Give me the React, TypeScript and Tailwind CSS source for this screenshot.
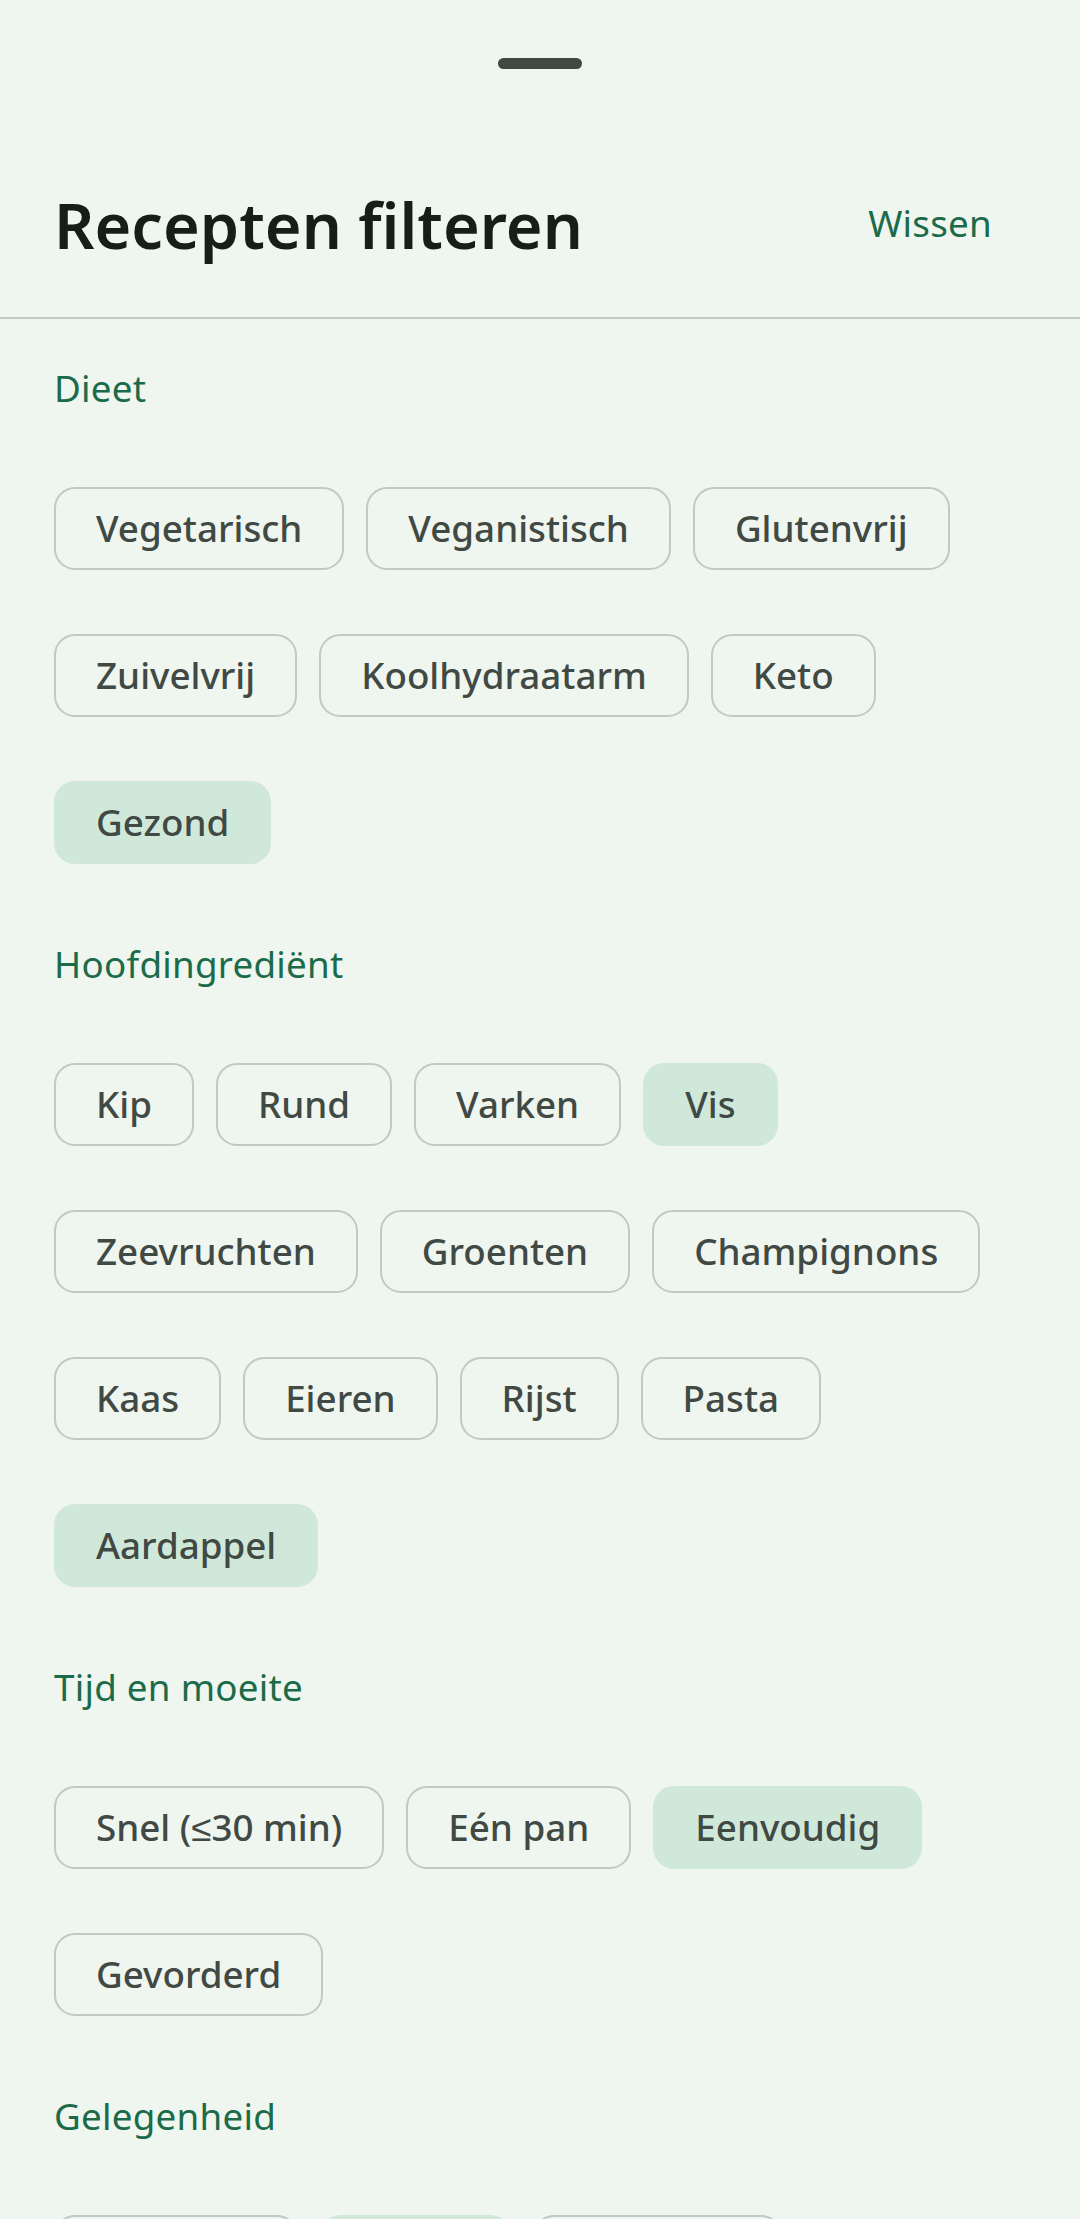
import { useState } from 'react';

type Section = {
  title: string;
  options: string[];
};

const sections: Section[] = [
  {
    title: 'Dieet',
    options: ['Vegetarisch', 'Veganistisch', 'Glutenvrij', 'Zuivelvrij', 'Koolhydraatarm', 'Keto', 'Gezond'],
  },
  {
    title: 'Hoofdingrediënt',
    options: ['Kip', 'Rund', 'Varken', 'Vis', 'Zeevruchten', 'Groenten', 'Champignons', 'Kaas', 'Eieren', 'Rijst', 'Pasta', 'Aardappel'],
  },
  {
    title: 'Tijd en moeite',
    options: ['Snel (≤30 min)', 'Eén pan', 'Eenvoudig', 'Gevorderd'],
  },
  {
    title: 'Gelegenheid',
    options: ['Dagelijks', 'Lunch', 'Feestelijk'],
  },
];

const initialSelected = ['Gezond', 'Vis', 'Aardappel', 'Eenvoudig', 'Lunch'];

function FilterChip({ label, selected, onToggle }: { label: string; selected: boolean; onToggle: () => void }) {
  return (
    <button
      type="button"
      onClick={onToggle}
      className={
        selected
          ? 'flex h-[83px] items-center rounded-[21px] border-2 border-transparent bg-[#d0e8da] px-[40px] text-[36.75px] font-medium text-[#404943]'
          : 'flex h-[83px] items-center rounded-[21px] border-2 border-[#c3c9c2] bg-transparent px-[40px] text-[36.75px] font-medium text-[#404943]'
      }
    >
      {label}
    </button>
  );
}

export default function App() {
  const [selected, setSelected] = useState<string[]>(initialSelected);

  function toggle(option: string) {
    setSelected((current) =>
      current.includes(option) ? current.filter((item) => item !== option) : [...current, option],
    );
  }

  return (
    <main className="h-[2219px] overflow-hidden bg-[#eff5ef] font-['Noto_Sans',sans-serif]">
      <div className="flex justify-center pt-[58px]">
        <div className="h-[11px] w-[84px] rounded-full bg-[#404943]" />
      </div>

      <div className="mt-[107px] flex h-[96px] items-center justify-between px-[54px]">
        <h1 className="text-[63px] font-semibold leading-none text-[#171d19]">Recepten filteren</h1>
        <button type="button" onClick={() => setSelected([])} className="mr-[34px] text-[36.75px] tracking-[0.26px] text-[#1b6b4a]">
          Wissen
        </button>
      </div>

      <div className="mt-[45px] h-[2px] bg-[#c4c9c3]" />

      <div className="flex flex-col gap-[74px] px-[54px] pt-[43px]">
        {sections.map((section) => (
          <section key={section.title}>
            <h2 className="text-[36.75px] leading-[52px] tracking-[0.26px] text-[#1b6b4a]">{section.title}</h2>
            <div className="mt-[73px] flex flex-wrap gap-x-[22px] gap-y-[64px]">
              {section.options.map((option) => (
                <FilterChip
                  key={option}
                  label={option}
                  selected={selected.includes(option)}
                  onToggle={() => toggle(option)}
                />
              ))}
            </div>
          </section>
        ))}
      </div>
    </main>
  );
}
